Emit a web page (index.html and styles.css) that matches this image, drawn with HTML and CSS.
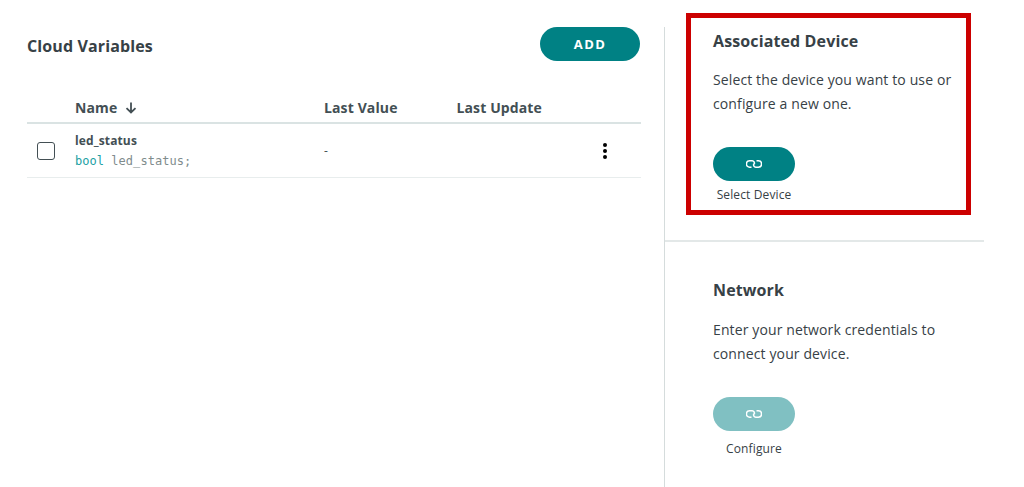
FILE: index.html
```html
<!DOCTYPE html>
<html lang="en">
<head>
<meta charset="utf-8">
<title>Cloud Variables</title>
<link rel="stylesheet" href="styles.css">
</head>
<body>
<main class="page">
  <section class="vars">
    <header class="vars-head">
      <h2 class="vars-title">Cloud Variables</h2>
      <button class="add-btn">ADD</button>
    </header>
    <div class="row row-head">
      <div class="cell-check"></div>
      <div class="cell-name">Name
        <svg class="sort" width="12" height="12" viewBox="0 0 12 12"><path d="M6 .5v10M1.500 6.200 6 10.500l4.500-4.300" fill="none" stroke="currentColor" stroke-width="1.800"/></svg>
      </div>
      <div class="cell-value">Last Value</div>
      <div class="cell-update">Last Update</div>
    </div>
    <div class="row row-item">
      <div class="cell-check"><span class="checkbox"></span></div>
      <div class="cell-name">
        <div class="var-name">led_status</div>
        <code class="var-decl"><span class="kw">bool</span> led_status;</code>
      </div>
      <div class="cell-value val-dash">-</div>
      <div class="cell-update"></div>
      <div class="cell-menu">
        <svg width="4" height="16" viewBox="0 0 4 16"><circle cx="2" cy="2" r="2"/><circle cx="2" cy="8" r="2"/><circle cx="2" cy="14" r="2"/></svg>
      </div>
    </div>
  </section>
  <aside class="side">
    <section class="card card-device">
      <h3 class="card-title">Associated Device</h3>
      <p class="card-text">Select the device you want to use or<br>configure a new one.</p>
      <div class="action">
        <button class="pill">
          <svg class="link" width="16" height="8" viewBox="0 0 16 8" fill="none" stroke="#fff" stroke-width="1.500"><path d="M5.500 7.200H3.600a3.200 3.200 0 0 1 0-6.400h2.600a2.400 2.400 0 0 1 2 3.400"/><path d="M10.500.8h1.900a3.200 3.200 0 0 1 0 6.400H9.800a2.400 2.400 0 0 1-2-3.400"/></svg>
        </button>
        <span class="action-label">Select Device</span>
      </div>
    </section>
    <section class="card card-network">
      <h3 class="card-title">Network</h3>
      <p class="card-text">Enter your network credentials to<br>connect your device.</p>
      <div class="action">
        <button class="pill pill-off">
          <svg class="link" width="16" height="8" viewBox="0 0 16 8" fill="none" stroke="#fff" stroke-width="1.500"><path d="M5.500 7.200H3.600a3.200 3.200 0 0 1 0-6.400h2.600a2.400 2.400 0 0 1 2 3.400"/><path d="M10.500.8h1.900a3.200 3.200 0 0 1 0 6.400H9.800a2.400 2.400 0 0 1-2-3.400"/></svg>
        </button>
        <span class="action-label">Configure</span>
      </div>
    </section>
    <div class="highlight"></div>
  </aside>
</main>
</body>
</html>
```
FILE: styles.css
```css
* { box-sizing: border-box; }
html, body { margin: 0; height: 100%; background: #fff; overflow: hidden; }
body { font-family: "Open Sans", sans-serif; color: #374146; letter-spacing: 0.12px; }
.page { display: flex; height: 487px; width: 984px; padding-top: 27px; }
.vars { width: 641px; padding-left: 27px; flex: none; }
.vars-head { display: flex; justify-content: space-between; align-items: center; height: 34px; padding-right: 1px; margin-bottom: 32px; }
.vars-title { margin: 0; padding-top: 4px; font-size: 16px; font-weight: 700; line-height: 34px; color: #374146; }
.add-btn { width: 100px; height: 34px; border: 0; border-radius: 17px; background: #008184; color: #fff; font: 700 13px "Open Sans", sans-serif; letter-spacing: 1.4px; padding: 0; }
.row { display: flex; }
.row-head { height: 31px; align-items: center; border-bottom: 2px solid #dae3e3; font-size: 14px; font-weight: 700; color: #434f54; padding-bottom: 1px; }
.row-item { height: 54px; align-items: center; border-bottom: 1px solid #e8eded; }
.cell-check { width: 48px; flex: none; }
.cell-name { width: 249px; flex: none; padding-top: 2px; }
.row-head .cell-name { padding-top: 0; }
.cell-value { width: 132.5px; flex: none; }
.cell-update { width: 140px; flex: none; }
.cell-menu { display: flex; margin-left: 6px; color: #000; }
.sort { margin-left: 4px; vertical-align: -1px; }
.checkbox { display: block; width: 18px; height: 18px; margin-left: 10px; border: 1.5px solid #434f54; border-radius: 3px; }
.var-name { font-size: 12px; font-weight: 700; line-height: 18px; color: #434f54; }
.var-decl { display: block; font: 12px/20px "DejaVu Sans Mono", monospace; letter-spacing: 0.04px; color: #7f8c8d; margin-top: 1px; }
.kw { color: #1da1a4; }
.val-dash { font-size: 12px; color: #434f54; }
.side { position: relative; flex: 1; margin-left: 23px; border-left: 1px solid #d5dcdc; }
.card { padding-left: 48px; }
.card-device { height: 213px; border-bottom: 2px solid #e3e8e8; }
.card-network { padding-top: 36px; }
.card-title { margin: 0; font-size: 16px; font-weight: 700; line-height: 24px; color: #374146; }
.card-device .card-title { margin-top: 2px; }
.card-text { margin: 15px 0 0; font-size: 14px; line-height: 24px; color: #374146; }
.card-network .card-text { margin-top: 16px; }
.action { display: flex; flex-direction: column; align-items: center; width: 82px; margin-top: 31px; }
.pill { display: flex; align-items: center; justify-content: center; width: 82px; height: 34px; border: 0; border-radius: 17px; background: #008184; padding: 0; }
.pill-off { background: #80c0c2; }
.action-label { font-size: 12px; line-height: 16px; color: #374146; white-space: nowrap; margin-top: 6px; }
.card-network .action-label { margin-top: 10px; }
.highlight { position: absolute; left: 20.5px; top: -14px; width: 285px; height: 202px; border: 5px solid #cc0000; pointer-events: none; }
```
